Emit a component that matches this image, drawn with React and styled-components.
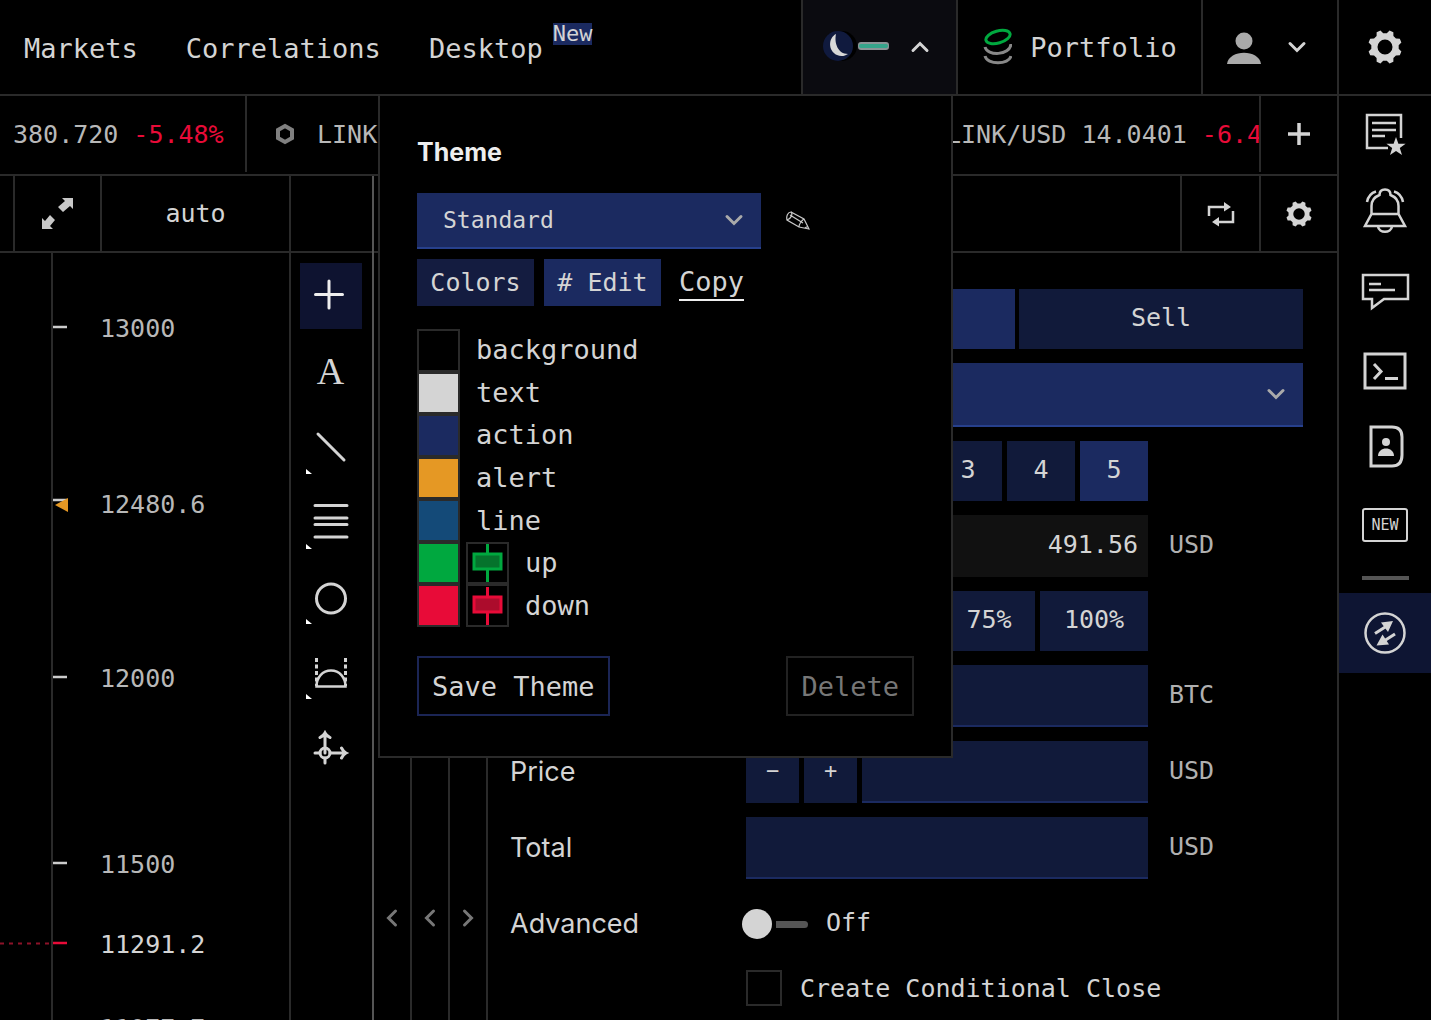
import styled, { createGlobalStyle } from "styled-components";
import { useState } from "react";

const mono = `"DejaVu Sans Mono", "Liberation Mono", monospace`;
const sans = `Inter, "Liberation Sans", sans-serif`;

const prices = [
  { value: "13000", y: 74 },
  { value: "12480.6", y: 250, tick: 247, alert: true },
  { value: "12000", y: 424 },
  { value: "11500", y: 610 },
  { value: "11291.2", y: 690, last: true },
  { value: "11077.7", y: 774 },
];

const colors = [
  { name: "background", color: "#000000" },
  { name: "text", color: "#d4d4d4" },
  { name: "action", color: "#1b2a60" },
  { name: "alert", color: "#e59824" },
  { name: "line", color: "#144a78" },
  { name: "up", color: "#00a83f", fill: "#05732c" },
  { name: "down", color: "#e80b38", fill: "#ac0c2c" },
];

const Chevron = ({ dir = "down", color = "#d4d4d4" }) => {
  const angle = { down: 0, left: 90, up: 180, right: 270 }[dir];
  return (
    <svg width="20" height="20" viewBox="0 0 20 20">
      <path
        d="M3 6.500l7 7 7-7"
        fill="none"
        stroke={color}
        strokeWidth="3"
        strokeLinecap="round"
        transform={`rotate(${angle} 10 10)`}
      />
    </svg>
  );
};

const Gear = ({ size }) => {
  const points = [];
  for (let i = 0; i < 8; i++) {
    [
      [-15, 13.8],
      [-7, 17],
      [7, 17],
      [15, 13.8],
    ].forEach(([offset, r]) => {
      const a = ((i * 45 + 22.5 + offset) * Math.PI) / 180;
      points.push(`${(17 + r * Math.cos(a)).toFixed(2)} ${(17 + r * Math.sin(a)).toFixed(2)}`);
    });
  }
  return (
    <svg width={size} height={size} viewBox="0 0 34 34">
      <path
        fillRule="evenodd"
        fill="#d4d4d4"
        d={`M${points.join("L")}ZM17 9.500a7.500 7.500 0 1 0 0 15a7.500 7.500 0 1 0 0-15Z`}
      />
    </svg>
  );
};

const Plus = ({ size }) => (
  <svg width={size} height={size} viewBox="0 0 24 24">
    <path d="M12 1v22M1 12h22" stroke="#d4d4d4" strokeWidth="3.500" />
  </svg>
);

const toolCorner = <path d="M6 56v5h6z" fill="#fff" stroke="none" />;

const tools = [
  { name: "Crosshair", drawing: <path d="M29 18v27M15.500 31.500h27" stroke="#eee" /> },
  { name: "Text", letter: "A" },
  {
    name: "Line",
    drawing: (
      <>
        <path d="M18 21l26 26" />
        {toolCorner}
      </>
    ),
  },
  {
    name: "Levels",
    drawing: (
      <>
        <path d="M15 17.500h32M15 30h32M15 36.500h32M15 49h32" />
        {toolCorner}
      </>
    ),
  },
  {
    name: "Ellipse",
    drawing: (
      <>
        <circle cx="31" cy="35.500" r="14.500" />
        {toolCorner}
      </>
    ),
  },
  {
    name: "Arc",
    drawing: (
      <>
        <path d="M16.500 20v28M45.500 20v28" strokeDasharray="4 2.500" strokeLinecap="butt" />
        <path d="M16.500 48.500h29c0-9-6-16-14.500-16s-14.500 7-14.500 16z" strokeWidth="2.500" />
        {toolCorner}
      </>
    ),
  },
  {
    name: "Measure",
    drawing: (
      <>
        <circle cx="25" cy="40" r="5" />
        <path d="M25 20v20M25 45v5M15 40h5M30 40h16M20 24.500c2-1 4-2.500 5-4.500 1 2 3 3.500 5 4.500M41.500 35c1 2 2.500 4 4.500 5-2 1-3.500 3-4.500 5" />
      </>
    ),
  },
];

const links = [
  {
    name: "News",
    drawing: (
      <>
        <path d="M28 38H7V5h34v23" />
        <path d="M12 13h24M12 20h24M12 26h13" />
        <path
          d="M36 27l2.400 6.800h7.200l-5.800 4.300 2.200 7-6-4.200-6 4.200 2.200-7-5.800-4.300h7.200z"
          fill="#d4d4d4"
          stroke="none"
        />
      </>
    ),
  },
  {
    name: "Alerts",
    drawing: (
      <path d="M11.500 26v-8c0-6 4-9.500 8-11 0-4 2-5.500 5.500-5.500s5.500 1.500 5.500 5.500c4 1.500 8 5 8 11v8M11.500 26h27l6.500 12H5zM18 38.500c1 7 13 7 14 0M7 14c1-5 4-9 9-10.500M43 14c-1-5-4-9-9-10.500" />
    ),
  },
  {
    name: "Chat",
    drawing: (
      <>
        <path d="M3 9h45v24H24l-12 9v-9H3z" />
        <path d="M9 18h12M9 24h26" />
      </>
    ),
  },
  {
    name: "Terminal",
    drawing: (
      <>
        <path d="M5 10h40v34H5z" strokeWidth="3" />
        <path d="M14 20l7 7.500-7 7.500M25 34.500h13" strokeWidth="3" />
      </>
    ),
  },
  {
    name: "Contacts",
    drawing: (
      <>
        <path d="M11 5h21q10 0 10 10v18q0 11-10 11H11z" strokeWidth="3" />
        <circle cx="26" cy="20" r="4" fill="#d4d4d4" stroke="none" />
        <path d="M18 34c0-10 16-10 16 0z" fill="#d4d4d4" stroke="none" />
      </>
    ),
  },
];

const App = () => {
  const [theme, setTheme] = useState("Standard");
  const [leverage, setLeverage] = useState("5");
  const [advanced, setAdvanced] = useState(false);

  return (
    <Page>
      <GlobalStyle />
      <Header>
        <Nav>
          <a href="#markets">Markets</a>
          <a href="#correlations">Correlations</a>
          <a href="#desktop">
            Desktop
            <NewTag>New</NewTag>
          </a>
        </Nav>
        <HeaderCell $width="155px" $pad="8px" $active>
          <HeaderButton aria-label="Theme" aria-expanded="true" $gap="20px">
            <svg width="68" height="34" viewBox="0 0 68 34">
              <circle cx="20" cy="16" r="15" fill="#000" />
              <circle cx="16" cy="16" r="15" fill="#101a3e" />
              <path d="M14 4c-8 4-8 17 1 21 4 2 8 1 11-1-10 0-14-11-12-20z" fill="#d8d8d8" />
              <rect x="36" y="12" width="31" height="8" rx="3" fill="#8b9496" />
              <rect x="37" y="14" width="29" height="4" rx="2" fill="#35a58b" />
            </svg>
            <Chevron dir="up" />
          </HeaderButton>
          <Popup>
            <PopupTitle>Theme</PopupTitle>
            <ThemeRow>
              <SelectBox>
                <select
                  aria-label="Theme name"
                  value={theme}
                  onChange={(e) => setTheme(e.target.value)}
                >
                  <option>Standard</option>
                </select>
                <Chevron color="#aaa" />
              </SelectBox>
              <PencilButton aria-label="Rename">
                <svg width="24" height="20" viewBox="0 0 24 20">
                  <path
                    d="M5 1l13 7 5 10-10-2L1 9C0 5 2 1 5 1zM5 1c2 2 0 7-4 8M4 4l13 8M18 8c-2 1-5 5-5 8M19 17l3-2"
                    fill="none"
                    stroke="#c8c8c8"
                    strokeWidth="1.200"
                  />
                </svg>
              </PencilButton>
            </ThemeRow>
            <ButtonRow>
              <SmallButton>Colors</SmallButton>
              <SmallButton $on># Edit</SmallButton>
              <CopyLink href="#copy">Copy</CopyLink>
            </ButtonRow>
            <ColorList>
              {colors.map((item) => (
                <li key={item.name}>
                  <Swatch aria-label={item.name} $color={item.color} />
                  {item.fill && (
                    <Swatch aria-label={`${item.name} candle`} $color="#000">
                      <svg width="39" height="38" viewBox="0 0 39 38">
                        <path d="M19.500 0v38" stroke={item.color} strokeWidth="3" />
                        <rect
                          x="6"
                          y="10"
                          width="27"
                          height="15"
                          fill={item.fill}
                          stroke={item.color}
                          strokeWidth="3"
                        />
                      </svg>
                    </Swatch>
                  )}
                  <span>{item.name}</span>
                </li>
              ))}
            </ColorList>
            <PopupFooter>
              <OutlineButton>Save Theme</OutlineButton>
              <OutlineButton disabled>Delete</OutlineButton>
            </PopupFooter>
          </Popup>
        </HeaderCell>
        <HeaderCell $width="245px">
          <HeaderButton>
            <svg width="30" height="38" viewBox="0 0 30 38" fill="none" strokeWidth="3">
              <ellipse cx="16" cy="9" rx="12.500" ry="6" stroke="#00a83f" transform="rotate(-16 16 9)" />
              <path d="M3 19c2 9 25 9 26-3M3 28c2 9 24 9 26 0" stroke="#888" />
            </svg>
            Portfolio
          </HeaderButton>
        </HeaderCell>
        <HeaderCell $width="136px" $pad="6px">
          <HeaderButton aria-label="Account" $gap="26px">
            <svg width="34" height="34" viewBox="0 0 34 34" fill="#aaa">
              <ellipse cx="17" cy="11" rx="8.500" ry="8.500" />
              <path d="M0 34c2-15 32-15 34 0z" />
            </svg>
            <Chevron />
          </HeaderButton>
        </HeaderCell>
        <HeaderCell $width="94px">
          <HeaderButton aria-label="Settings">
            <Gear size={34} />
          </HeaderButton>
        </HeaderCell>
      </Header>

      <Body>
        <Main>
          <Tickers>
            <Ticker $width="247px">
              <span>380.720</span>
              <Red>-5.48%</Red>
            </Ticker>
            <Ticker $indent>
              <Hexagon />
              <span>LINK</span>
            </Ticker>
            <Ticker $width="385px" $indent>
              <Hexagon />
              <span>LINK/USD 14.0401</span>
              <Red>-6.4</Red>
            </Ticker>
            <AddButton aria-label="Add market">
              <Plus size={24} />
            </AddButton>
          </Tickers>

          <Panes>
            <ChartPane>
              <Toolbar>
                <ToolbarCell as="span" $width="15px" />
                <ToolbarCell $width="87px" aria-label="Fullscreen">
                  <svg width="32" height="32" viewBox="0 0 32 32" fill="#c8c8c8">
                    <path d="M20 0h11v11l-3-3-7 6-5-5 7-6zM11 31H0V20l3 3 5-6 5 5-5 6z" />
                  </svg>
                </ToolbarCell>
                <ToolbarCell $width="189px">auto</ToolbarCell>
              </Toolbar>
              <ChartRow>
                <Scale>
                  <svg width="289" height="790" viewBox="0 0 289 790">
                    <path d="M52 0v790" stroke="#2a2a2a" strokeWidth="2" />
                    <path d="M0 690.500h51" stroke="#8c1228" strokeWidth="2" strokeDasharray="4 5" />
                    {prices.map((price) => (
                      <g key={price.value}>
                        <path
                          d={`M53 ${price.tick || price.y}h14`}
                          stroke={price.last ? "#e80b38" : "#ccc"}
                          strokeWidth="2.500"
                        />
                        {price.alert && <path d="M55 252l13-7v14z" fill="#e59824" />}
                        <text x="100" y={price.y + 10} fill={price.last ? "#d4d4d4" : "#b8b8b8"}>
                          {price.value}
                        </text>
                      </g>
                    ))}
                  </svg>
                </Scale>
                <Tools>
                  {tools.map((tool, i) => (
                    <Tool key={tool.name} aria-label={tool.name} $active={i === 0}>
                      {tool.letter || (
                        <svg width="62" height="66" viewBox="0 0 62 66">
                          {tool.drawing}
                        </svg>
                      )}
                    </Tool>
                  ))}
                </Tools>
              </ChartRow>
            </ChartPane>

            <TradePane>
              <Toolbar $end>
                <ToolbarCell $width="79px" $left aria-label="Swap">
                  <svg width="28" height="26" viewBox="0 0 28 26">
                    <path d="M2 15V6h15M26 10v11H11" fill="none" stroke="#d4d4d4" strokeWidth="2.500" />
                    <path d="M17 1l7 5-7 4.500zM12 25.500l-7-4.500 7-5z" fill="#d4d4d4" />
                  </svg>
                </ToolbarCell>
                <ToolbarCell $width="78px" $left aria-label="Form settings">
                  <Gear size={26} />
                </ToolbarCell>
              </Toolbar>
              <TradeRow>
                {["left", "left", "right"].map((dir, i) => (
                  <Collapse key={i} aria-label={`Move ${dir}`}>
                    <Chevron dir={dir} color="#777" />
                  </Collapse>
                ))}
                <Form>
                  <Wide>
                    <FormButton $on $grow aria-label="Buy" />
                    <FormButton $width="284px">Sell</FormButton>
                  </Wide>
                  <Wide>
                    <SelectBox $tall>
                      <select aria-label="Order type">
                        <option></option>
                      </select>
                      <Chevron color="#aaa" />
                    </SelectBox>
                  </Wide>
                  <Field>
                    <Controls $end>
                      {["3", "4", "5"].map((n) => (
                        <FormButton
                          key={n}
                          $width="68px"
                          $on={leverage === n}
                          onClick={() => setLeverage(n)}
                        >
                          {n}
                        </FormButton>
                      ))}
                    </Controls>
                  </Field>
                  <Field>
                    <Controls>
                      <Available>491.56</Available>
                    </Controls>
                    <Unit>USD</Unit>
                  </Field>
                  <Field>
                    <Controls $end>
                      <FormButton $width="92px">75%</FormButton>
                      <FormButton $width="108px">100%</FormButton>
                    </Controls>
                  </Field>
                  <Field>
                    <Controls>
                      <Input aria-label="Amount" />
                    </Controls>
                    <Unit>BTC</Unit>
                  </Field>
                  <Field>
                    <Label htmlFor="price">Price</Label>
                    <Controls>
                      <StepButton $width="53px">−</StepButton>
                      <StepButton $width="53px">+</StepButton>
                      <Input id="price" />
                    </Controls>
                    <Unit>USD</Unit>
                  </Field>
                  <Field>
                    <Label htmlFor="total">Total</Label>
                    <Controls>
                      <Input id="total" />
                    </Controls>
                    <Unit>USD</Unit>
                  </Field>
                  <Field>
                    <Label htmlFor="advanced">Advanced</Label>
                    <Controls $center>
                      <Switch
                        id="advanced"
                        type="checkbox"
                        role="switch"
                        checked={advanced}
                        onChange={(e) => setAdvanced(e.target.checked)}
                      />
                      <SwitchText>{advanced ? "On" : "Off"}</SwitchText>
                    </Controls>
                  </Field>
                  <CheckLabel>
                    <input type="checkbox" />
                    Create Conditional Close
                  </CheckLabel>
                </Form>
              </TradeRow>
            </TradePane>
          </Panes>
        </Main>

        <Sidebar>
          {links.map((link) => (
            <SideButton key={link.name} aria-label={link.name}>
              <svg width="50" height="50" viewBox="0 0 50 50">
                {link.drawing}
              </svg>
            </SideButton>
          ))}
          <SideButton>
            <NewBox>NEW</NewBox>
          </SideButton>
          <Divider />
          <SideButton aria-label="Trade" $active>
            <svg width="50" height="50" viewBox="0 0 50 50">
              <circle cx="25" cy="25" r="19.500" />
              <path d="M15 25.500l11-7M35 26l-11 7" strokeWidth="3" />
              <path d="M21 14.500l12-1.500-5 11zM29 36.500l-12.500 1 6-11z" fill="#d4d4d4" stroke="none" />
            </svg>
          </SideButton>
        </Sidebar>
      </Body>
    </Page>
  );
};

const Hexagon = () => (
  <svg width="20" height="22" viewBox="0 0 20 22">
    <path d="M10 3l7 4v8l-7 4-7-4V7z" fill="none" stroke="#808080" strokeWidth="4" />
  </svg>
);

const GlobalStyle = createGlobalStyle`
  * {
    box-sizing: border-box;
  }
  body {
    margin: 0;
    background: #000;
    color: #d4d4d4;
    font-family: ${mono};
    font-size: 25px;
  }
  button, input, select {
    font: inherit;
    color: inherit;
    margin: 0;
    padding: 0;
    border: 0;
    border-radius: 0;
    background: none;
  }
  a {
    color: inherit;
    text-decoration: none;
  }
  svg {
    display: block;
    flex: none;
  }
`;

const Page = styled.div`
  height: 100vh;
  display: flex;
  flex-direction: column;
  overflow: hidden;
`;

const Header = styled.header`
  display: flex;
  height: 96px;
  flex: none;
  border-bottom: 2px solid #2a2a2a;
  font-size: 27px;
`;

const Nav = styled.nav`
  flex: 1;
  display: flex;
  align-items: center;
  gap: 48px;
  padding: 2px 0 0 24px;
  white-space: nowrap;
  a {
    position: relative;
  }
`;

const NewTag = styled.span`
  position: absolute;
  left: 100%;
  top: -10px;
  margin-left: 10px;
  background: #1b2a60;
  font-size: 22px;
  line-height: 22px;
`;

const HeaderCell = styled.div`
  position: relative;
  flex: none;
  width: ${(p) => p.$width};
  padding-right: ${(p) => p.$pad};
  border-left: 2px solid #2a2a2a;
  background: ${(p) => (p.$active ? "#0b0b10" : "none")};
`;

const HeaderButton = styled.button`
  width: 100%;
  height: 100%;
  display: flex;
  align-items: center;
  justify-content: center;
  gap: ${(p) => p.$gap || "18px"};
`;

const Popup = styled.section`
  position: absolute;
  z-index: 2;
  top: 94px;
  right: 3px;
  width: 575px;
  padding: 38px 37px 40px;
  border: 2px solid #2a2a2a;
  background: #000;
`;

const PopupTitle = styled.h2`
  margin: 0 0 23px;
  font: 700 25px/36px ${sans};
  color: #eee;
`;

const ThemeRow = styled.div`
  display: flex;
  align-items: center;
  gap: 20px;
  margin-bottom: 10px;
`;

const SelectBox = styled.span`
  display: grid;
  align-items: center;
  width: ${(p) => (p.$tall ? "100%" : "344px")};
  height: ${(p) => (p.$tall ? "64px" : "56px")};
  background: #1b2a60;
  border-bottom: 2px solid #27408c;
  font-size: 23px;
  select {
    grid-area: 1 / 1;
    width: 100%;
    height: 100%;
    padding-left: 26px;
    appearance: none;
    outline: none;
  }
  svg {
    grid-area: 1 / 1;
    justify-self: end;
    margin-right: 17px;
    pointer-events: none;
  }
`;

const PencilButton = styled.button`
  width: 34px;
  height: 34px;
  display: grid;
  place-items: center;
`;

const ButtonRow = styled.div`
  display: flex;
  align-items: center;
  gap: 10px;
  margin-bottom: 23px;
`;

const SmallButton = styled.button`
  width: 117px;
  height: 47px;
  background: ${(p) => (p.$on ? "#1b2a60" : "#141c40")};
  font-size: 25px;
`;

const CopyLink = styled.a`
  margin-left: 8px;
  border-bottom: 2px solid #eee;
  font-size: 27px;
  line-height: 34px;
`;

const ColorList = styled.ul`
  height: 298px;
  margin: 0 0 29px;
  padding: 0;
  list-style: none;
  display: flex;
  flex-direction: column;
  font-size: 27px;
  li {
    flex: 1;
    display: flex;
    align-items: center;
    gap: 6px;
  }
  span {
    margin-left: 10px;
    line-height: 34px;
  }
`;

const Swatch = styled.button`
  width: 43px;
  height: 100%;
  border: 2px solid #2a2a2a;
  background: ${(p) => p.$color};
  overflow: hidden;
`;

const PopupFooter = styled.div`
  display: flex;
  justify-content: space-between;
`;

const OutlineButton = styled.button`
  height: 60px;
  padding: 0 13px;
  border: 2px solid #1b2555;
  font-size: 27px;
  &:disabled {
    border-color: #222;
    color: #777;
  }
`;

const Body = styled.div`
  flex: 1;
  min-height: 0;
  display: flex;
`;

const Main = styled.main`
  flex: 1;
  min-width: 0;
  display: flex;
  flex-direction: column;
`;

const Tickers = styled.div`
  display: flex;
  height: 80px;
  flex: none;
  padding-bottom: 2px;
  border-bottom: 2px solid #2a2a2a;
  color: #b8b8b8;
`;

const Ticker = styled.div`
  display: flex;
  align-items: center;
  gap: ${(p) => (p.$indent ? "22px" : "15px")};
  flex: ${(p) => (p.$width ? "none" : "1")};
  width: ${(p) => p.$width};
  padding-left: ${(p) => (p.$indent ? "28px" : "13px")};
  border-right: 2px solid #2a2a2a;
  white-space: nowrap;
  overflow: hidden;
`;

const Red = styled.span`
  color: #e80b38;
  ${Ticker} svg ~ & {
    margin-left: -7px;
  }
`;

const AddButton = styled.button`
  width: 76px;
  display: grid;
  place-items: center;
`;

const Panes = styled.div`
  flex: 1;
  min-height: 0;
  display: flex;
`;

const ChartPane = styled.section`
  width: 374px;
  flex: none;
  display: flex;
  flex-direction: column;
  border-right: 2px solid #555;
`;

const Toolbar = styled.div`
  display: flex;
  height: 77px;
  flex: none;
  justify-content: ${(p) => (p.$end ? "flex-end" : "flex-start")};
  border-bottom: 2px solid #2a2a2a;
`;

const ToolbarCell = styled.button`
  width: ${(p) => p.$width};
  display: grid;
  place-items: center;
  border: solid #2a2a2a;
  border-width: ${(p) => (p.$left ? "0 0 0 2px" : "0 2px 0 0")};
`;

const ChartRow = styled.div`
  flex: 1;
  min-height: 0;
  display: flex;
`;

const Scale = styled.div`
  width: 289px;
  overflow: hidden;
`;

const Tools = styled.div`
  flex: 1;
  display: flex;
  flex-direction: column;
  align-items: center;
  gap: 9px;
  padding: 10px 2px 0 0;
  border-left: 2px solid #2a2a2a;
`;

const Tool = styled.button`
  width: 62px;
  height: 66px;
  flex: none;
  background: ${(p) => (p.$active ? "#0e1330" : "none")};
  font: 38px/66px "Liberation Serif", serif;
  svg {
    fill: none;
    stroke: #d4d4d4;
    stroke-width: 3;
    stroke-linecap: round;
  }
`;

const TradePane = styled.section`
  flex: 1;
  min-width: 0;
  display: flex;
  flex-direction: column;
`;

const TradeRow = styled.div`
  flex: 1;
  min-height: 0;
  display: flex;
`;

const Collapse = styled.button`
  width: 38px;
  flex: none;
  display: flex;
  align-items: flex-end;
  justify-content: center;
  padding-bottom: 92px;
  border-right: 2px solid #2a2a2a;
`;

const Form = styled.form`
  flex: 1;
  min-width: 0;
  display: flex;
  flex-direction: column;
  gap: 14px;
  padding: 36px 34px 0 22px;
`;

const Wide = styled.div`
  display: flex;
  gap: 4px;
  padding-left: 236px;
`;

const FormButton = styled.button.attrs({ type: "button" })`
  width: ${(p) => p.$width};
  min-height: 60px;
  padding-bottom: 3px;
  flex: ${(p) => (p.$grow ? "1" : "none")};
  background: ${(p) => (p.$on ? "#1b2a60" : "#111a3a")};
`;

const StepButton = styled(FormButton)`
  font-size: 22px;
`;

const Field = styled.div`
  display: grid;
  grid-template-columns: 236px 402px 1fr;
`;

const Label = styled.label`
  align-self: center;
  font: 27px/34px ${sans};
`;

const Controls = styled.div`
  grid-column: 2;
  display: flex;
  gap: ${(p) => (p.$center ? "18px" : "5px")};
  min-height: ${(p) => (p.$end ? "60px" : "62px")};
  align-items: ${(p) => (p.$center ? "center" : "stretch")};
  justify-content: ${(p) => (p.$end ? "flex-end" : "flex-start")};
`;

const Available = styled.output`
  flex: 1;
  padding-right: 10px;
  background: #111;
  text-align: right;
  line-height: 60px;
`;

const Unit = styled.span`
  align-self: center;
  padding: 0 0 3px 21px;
  color: #b0b0b0;
`;

const Input = styled.input`
  flex: 1;
  min-width: 0;
  padding: 0 12px;
  background: #111a3a;
  border-bottom: 2px solid #1b2a60;
`;

const Switch = styled.input`
  appearance: none;
  display: flex;
  align-items: center;
  gap: 4px;
  width: 66px;
  height: 30px;
  margin-left: -4px;
  &::before {
    content: "";
    width: 30px;
    height: 30px;
    border-radius: 50%;
    background: #d4d4d4;
  }
  &::after {
    content: "";
    width: 32px;
    height: 7px;
    border-radius: 0 4px 4px 0;
    background: #555;
  }
  &:checked {
    flex-direction: row-reverse;
  }
`;

const SwitchText = styled.span`
  padding-bottom: 3px;
`;

const CheckLabel = styled.label`
  display: flex;
  align-items: center;
  gap: 18px;
  height: 38px;
  padding-left: 236px;
  white-space: nowrap;
  input {
    appearance: none;
    width: 36px;
    height: 36px;
    border: 2px solid #2a2a2a;
  }
  input:checked {
    background: #1b2a60;
  }
`;

const Sidebar = styled.aside`
  width: 94px;
  flex: none;
  border-left: 2px solid #2a2a2a;
`;

const SideButton = styled.button`
  width: 100%;
  height: ${(p) => (p.$active ? "80px" : "78px")};
  display: grid;
  place-items: center;
  background: ${(p) => (p.$active ? "#0e1533" : "none")};
  svg {
    fill: none;
    stroke: #d4d4d4;
    stroke-width: 2.5;
  }
`;

const NewBox = styled.span`
  width: 46px;
  border: 2px solid #d4d4d4;
  border-radius: 3px;
  font: 15px/30px ${mono};
`;

const Divider = styled.hr`
  width: 47px;
  height: 4px;
  margin: 12px auto 13px;
  border: 0;
  background: #555;
`;

export default App;
